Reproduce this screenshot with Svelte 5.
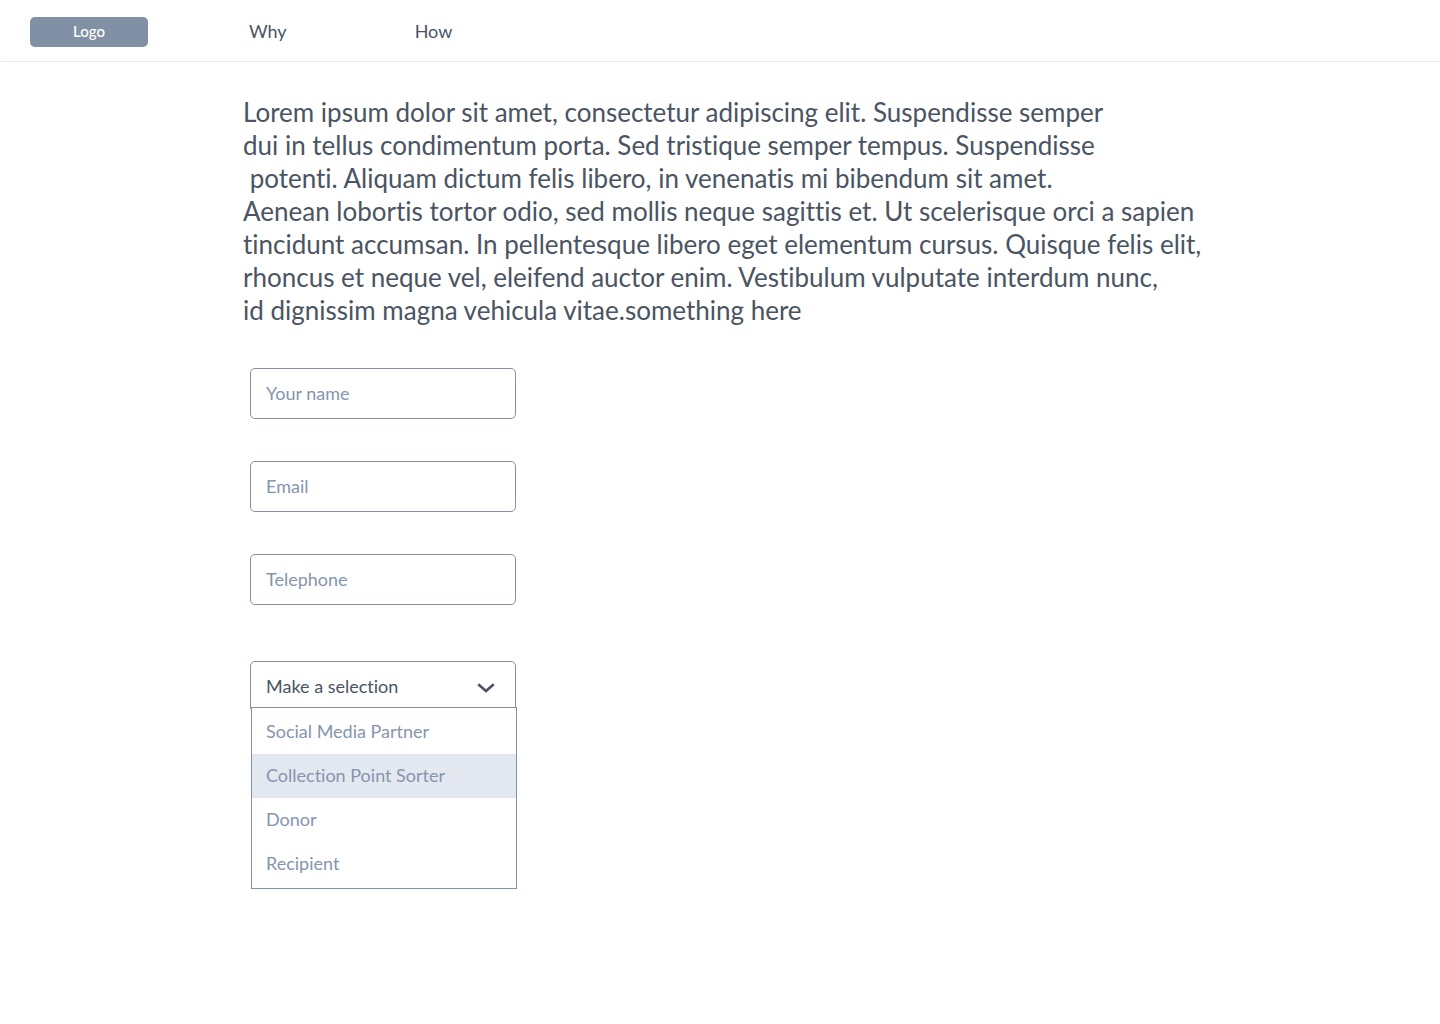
<script>
  const lines = [
    'Lorem ipsum dolor sit amet, consectetur adipiscing elit. Suspendisse semper',
    'dui in tellus condimentum porta. Sed tristique semper tempus. Suspendisse',
    ' potenti. Aliquam dictum felis libero, in venenatis mi bibendum sit amet.',
    'Aenean lobortis tortor odio, sed mollis neque sagittis et. Ut scelerisque orci a sapien',
    'tincidunt accumsan. In pellentesque libero eget elementum cursus. Quisque felis elit,',
    'rhoncus et neque vel, eleifend auctor enim. Vestibulum vulputate interdum nunc,',
    'id dignissim magna vehicula vitae.something here'
  ];
  const roles = ['Social Media Partner', 'Collection Point Sorter', 'Donor', 'Recipient'];

  let role = $state('');
  let open = $state(true);
  let active = $state(1);

  function toggle(event) {
    event.preventDefault();
    open = !open;
  }

  function choose(option) {
    role = option;
    open = false;
  }
</script>

<header class="bar">
  <a class="logo" href="/">Logo</a>
  <nav class="links">
    <a href="#why">Why</a>
    <a href="#how">How</a>
  </nav>
</header>

<main class="page">
  <p class="intro">{lines.join('\n')}</p>

  <form class="form">
    <input type="text" name="name" placeholder="Your name" aria-label="Your name" />
    <input type="email" name="email" placeholder="Email" aria-label="Email" />
    <input type="tel" name="telephone" placeholder="Telephone" aria-label="Telephone" />

    <div class="picker">
      <select name="role" aria-label="Make a selection" bind:value={role} onmousedown={toggle}>
        <option value="">Make a selection</option>
        {#each roles as option}
          <option value={option}>{option}</option>
        {/each}
      </select>
      <svg class="chevron" viewBox="0 0 18 12" aria-hidden="true">
        <path d="M1.2 2.2 L9 9 L16.8 2.2" />
      </svg>
      {#if open}
        <div class="menu" role="listbox" aria-label="Roles">
          {#each roles as option, i}
            <button
              type="button"
              role="option"
              aria-selected={role === option}
              class:active={active === i}
              onmouseenter={() => (active = i)}
              onclick={() => choose(option)}>{option}</button>
          {/each}
        </div>
      {/if}
    </div>
  </form>
</main>

<style>
  :global(body) {
    background: #fff;
    color: #4a5462;
    font-family: Lato, 'Liberation Sans', sans-serif;
    font-size: 18px;
    font-variant-ligatures: none;
  }

  .bar {
    display: flex;
    align-items: center;
    gap: 101px;
    padding: 17px 29px 14px;
    margin-left: 1px;
    border-bottom: 1px solid #e4e8f1;
  }

  .logo {
    width: 118px;
    padding-bottom: 2px;
    border-radius: 5px;
    background: #8290a6;
    color: #fff;
    font-size: 15px;
    font-weight: 500;
    line-height: 28px;
    text-align: center;
    text-decoration: none;
  }

  .links {
    display: flex;
    gap: 128px;
  }

  .links a {
    padding-bottom: 2px;
    color: inherit;
    line-height: 28px;
    text-decoration: none;
  }

  .page {
    padding: 34px 40px 40px 243px;
  }

  .intro {
    margin: 0;
    font-size: 26px;
    line-height: 33px;
    white-space: pre-wrap;
  }

  .form {
    display: flex;
    flex-direction: column;
    align-items: flex-start;
    gap: 42px;
    padding: 41px 7px 0;
  }

  input,
  select {
    box-sizing: border-box;
    width: 266px;
    height: 51px;
    padding: 0 15px 2px;
    border: 1px solid #8290a6;
    border-radius: 5px;
    background: #fff;
    color: #4a5462;
    font: inherit;
  }

  select {
    display: block;
    appearance: none;
  }

  input::placeholder {
    color: #8595ad;
    opacity: 1;
  }

  .picker {
    position: relative;
    margin-top: 14px;
  }

  .chevron {
    position: absolute;
    top: 21px;
    right: 21px;
    width: 18px;
    height: 12px;
    fill: none;
    stroke: #4a5462;
    stroke-width: 2.6;
    pointer-events: none;
  }

  .menu {
    position: relative;
    box-sizing: border-box;
    width: 100%;
    margin: -5px -1px 0 1px;
    padding: 2px 0;
    border: 1px solid #8290a6;
    background: #fff;
  }

  .menu button {
    display: block;
    width: 100%;
    height: 44px;
    padding: 0 14px 2px;
    border: 0;
    background: none;
    color: #8595ad;
    font: inherit;
    text-align: left;
  }

  .menu .active {
    background: #e4e8f1;
  }
</style>
